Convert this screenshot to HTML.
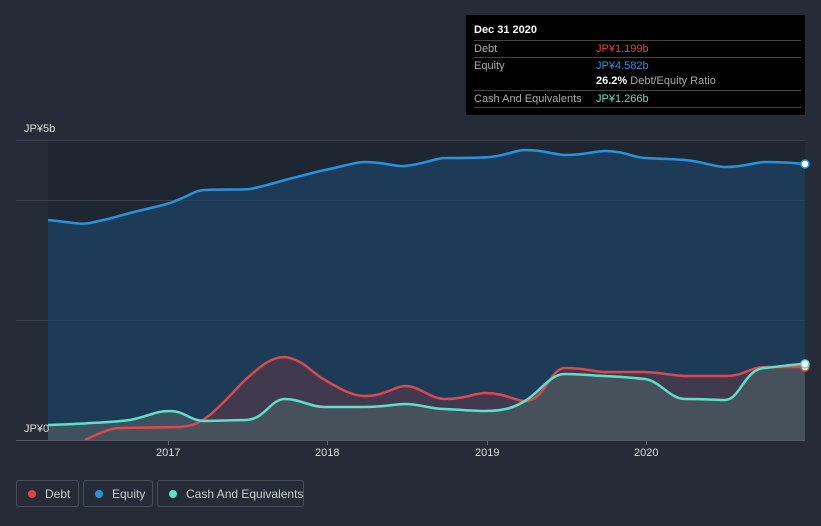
<!DOCTYPE html>
<html><head><meta charset="utf-8"><style>
body{margin:0;width:821px;height:526px;background:#262c37;font-family:"Liberation Sans",sans-serif;overflow:hidden;position:relative}
.tt{position:absolute;left:466px;top:15px;width:339px;height:100px;background:#000;color:#fff;font-size:11px}
.tt .h{position:absolute;left:8px;top:9px;font-weight:bold}
.row{position:absolute;left:8px;width:327px;border-top:1px solid #444;height:17px;line-height:17px}
.row span{position:absolute;left:122px}
.lbl{color:#aaa}
.leg{position:absolute;top:480px;height:27px;border:1px solid #4a505b;border-radius:3px;color:#ccc;font-size:12px;line-height:26px;box-sizing:border-box;white-space:nowrap}
.leg i{position:absolute;left:11px;top:9px;width:8px;height:8px;border-radius:50%}
.ax{position:absolute;color:#ddd;font-size:11px}
</style></head><body>
<svg width="821" height="526" style="position:absolute;left:0;top:0">
<rect x="48" y="140" width="757" height="300" fill="#1e2632"/>
<g stroke="#3a414d" stroke-width="1"><line x1="16" y1="140.5" x2="805" y2="140.5"/><line x1="16" y1="200.5" x2="805" y2="200.5"/><line x1="16" y1="320.5" x2="805" y2="320.5"/><line x1="16" y1="440.5" x2="805" y2="440.5" stroke="#555c68"/></g>
<defs><clipPath id="c"><rect x="48" y="140" width="757" height="300"/></clipPath></defs>
<g clip-path="url(#c)">
<path d="M48,220 C70,222 80,225 90,223 C110,219 120,216 130,213 C150,208 160,206 170,203 C190,196 195,190 205,190 C230,189 240,190 250,189 C265,186 275,183 285,180 C305,175 315,172 325,170 C345,166 355,162 365,162 C385,162 395,167 405,166 C425,164 435,158 445,158 C465,158 480,158 490,157 C505,156 515,150 525,150 C545,150 555,155 565,155 C585,155 595,151 605,151 C625,151 635,158 645,158 C665,159 675,159 685,160 C705,162 715,167 725,167 C745,167 755,162 765,162 C785,162 795,163 805,164 L805,440 L48,440Z" fill="#1c4566" fill-opacity="0.7"/>
<path d="M85,440 C100,433 110,428 120,428 L180,427 C195,426 200,422 210,415 C225,402 235,390 245,380 C260,367 270,357 285,357 C305,360 310,372 325,380 C345,392 355,396 365,396 C385,396 395,386 405,386 C420,386 430,399 445,399 C465,399 475,393 485,393 C505,393 515,401 525,401 C545,401 550,368 565,368 C585,368 595,372 605,372 L645,372 C665,373 675,376 685,376 L725,376 C745,376 750,367 765,367 L805,367 L805,440 L85,440Z" fill="#5a3a48" fill-opacity="0.6"/>
<path d="M48,425 C70,424 80,424 90,423 C115,422 120,421 130,420 C150,416 155,411 170,411 C185,411 190,421 205,421 L245,420 C265,420 270,399 285,399 C300,399 310,407 325,407 L365,407 C385,407 395,404 405,404 C420,404 430,409 445,409 C465,410 475,411 485,411 C505,411 515,407 525,401 C540,392 550,374 565,374 C585,374 595,376 605,376 C625,377 635,378 645,379 C660,381 670,399 685,399 C705,399 715,400 725,400 C740,400 745,368 765,368 C785,366 795,364 805,364 L805,440 L48,440Z" fill="#4a5a62" fill-opacity="0.75"/>
<path d="M48,220 C70,222 80,225 90,223 C110,219 120,216 130,213 C150,208 160,206 170,203 C190,196 195,190 205,190 C230,189 240,190 250,189 C265,186 275,183 285,180 C305,175 315,172 325,170 C345,166 355,162 365,162 C385,162 395,167 405,166 C425,164 435,158 445,158 C465,158 480,158 490,157 C505,156 515,150 525,150 C545,150 555,155 565,155 C585,155 595,151 605,151 C625,151 635,158 645,158 C665,159 675,159 685,160 C705,162 715,167 725,167 C745,167 755,162 765,162 C785,162 795,163 805,164" fill="none" stroke="#2394df" stroke-width="2.5"/>
<path d="M85,440 C100,433 110,428 120,428 L180,427 C195,426 200,422 210,415 C225,402 235,390 245,380 C260,367 270,357 285,357 C305,360 310,372 325,380 C345,392 355,396 365,396 C385,396 395,386 405,386 C420,386 430,399 445,399 C465,399 475,393 485,393 C505,393 515,401 525,401 C545,401 550,368 565,368 C585,368 595,372 605,372 L645,372 C665,373 675,376 685,376 L725,376 C745,376 750,367 765,367 L805,367" fill="none" stroke="#d9494f" stroke-width="2.5"/>
<path d="M48,425 C70,424 80,424 90,423 C115,422 120,421 130,420 C150,416 155,411 170,411 C185,411 190,421 205,421 L245,420 C265,420 270,399 285,399 C300,399 310,407 325,407 L365,407 C385,407 395,404 405,404 C420,404 430,409 445,409 C465,410 475,411 485,411 C505,411 515,407 525,401 C540,392 550,374 565,374 C585,374 595,376 605,376 C625,377 635,378 645,379 C660,381 670,399 685,399 C705,399 715,400 725,400 C740,400 745,368 765,368 C785,366 795,364 805,364" fill="none" stroke="#5de0c8" stroke-width="2.5"/>
</g>
<circle cx="805" cy="367" r="4" fill="#fff" stroke="#d9494f" stroke-width="1.5"/>
<circle cx="805" cy="364" r="4" fill="#fff" stroke="#5de0c8" stroke-width="1.5"/>
<circle cx="805" cy="164" r="4" fill="#fff" stroke="#2394df" stroke-width="1.5"/>
<g stroke="#666" stroke-width="1"><line x1="168.5" y1="441" x2="168.5" y2="445"/><line x1="327.5" y1="441" x2="327.5" y2="445"/><line x1="487.5" y1="441" x2="487.5" y2="445"/><line x1="646.5" y1="441" x2="646.5" y2="445"/></g>
</svg>
<div class="ax" style="left:24px;top:123px">JP¥5b</div>
<div class="ax" style="left:24px;top:423px">JP¥0</div>
<div class="ax" style="left:156px;top:447px">2017</div>
<div class="ax" style="left:315px;top:447px">2018</div>
<div class="ax" style="left:475px;top:447px">2019</div>
<div class="ax" style="left:634px;top:447px">2020</div>
<div class="tt">
<div class="h">Dec 31 2020</div>
<div class="row lbl" style="top:25px">Debt<span style="color:#e84040">JP¥1.199b</span></div>
<div class="row lbl" style="top:42px">Equity<span style="color:#2394df">JP¥4.582b</span></div>
<div style="position:absolute;left:130px;top:60px;color:#aaa"><b style="color:#fff">26.2%</b> Debt/Equity Ratio</div>
<div class="row lbl" style="top:75px">Cash And Equivalents<span style="color:#5de0c8">JP¥1.266b</span></div>
<div class="row" style="top:92px;height:0"></div>
</div>
<div class="leg" style="left:16px;width:63px"><i style="background:#e84040"></i><span style="position:absolute;left:28px">Debt</span></div>
<div class="leg" style="left:83px;width:70px"><i style="background:#2394df"></i><span style="position:absolute;left:28px">Equity</span></div>
<div class="leg" style="left:157px;width:147px"><i style="background:#5de0c8"></i><span style="position:absolute;left:28px">Cash And Equivalents</span></div>
</body></html>
